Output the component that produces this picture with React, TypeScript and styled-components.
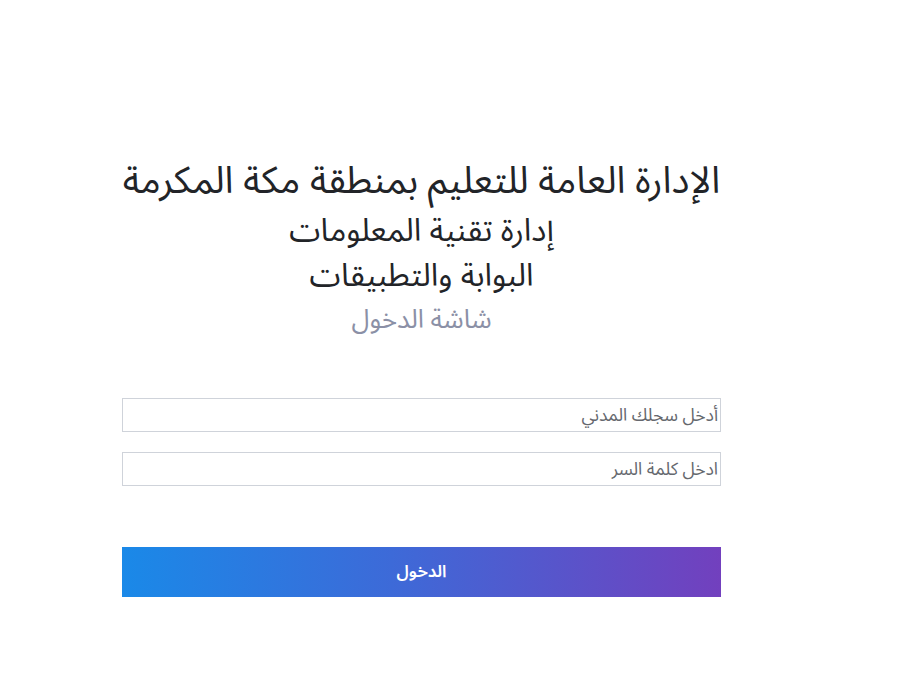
import styled, { createGlobalStyle } from 'styled-components';

const GlobalStyle = createGlobalStyle`
  html, body {
    margin: 0;
    padding: 0;
    background: #ffffff;
  }
  body {
    font-family: "Noto Sans Arabic", "Noto Sans", "DejaVu Sans", sans-serif;
  }
`;

const Page = styled.main`
  width: 921px;
  min-height: 679px;
  display: flex;
  justify-content: flex-start;
`;

const Panel = styled.div`
  width: 599px;
  margin-left: 122px;
  padding-top: 156px;
  direction: rtl;
  display: flex;
  flex-direction: column;
`;

const Titles = styled.header`
  display: flex;
  flex-direction: column;
  align-items: center;
  text-align: center;
`;

const Title = styled.h1<{ $size: number; $lh: number; $muted?: boolean }>`
  margin: 0;
  font-size: ${(p) => p.$size}px;
  font-weight: 400;
  line-height: ${(p) => p.$lh}px;
  color: ${(p) => (p.$muted ? '#8b90a6' : '#222428')};
  white-space: nowrap;
`;

const Form = styled.form`
  margin-top: 54px;
  display: flex;
  flex-direction: column;
  gap: 20px;
`;

const Field = styled.input`
  box-sizing: border-box;
  width: 100%;
  height: 34px;
  border: 1px solid #cfd3da;
  border-radius: 0;
  padding: 0 2px;
  font-family: inherit;
  font-size: 17.5px;
  color: #333;
  direction: rtl;
  outline: none;
  &::placeholder {
    color: #65686e;
  }
`;

const Submit = styled.button`
  margin-top: 41px;
  width: 100%;
  height: 50px;
  border: none;
  background: linear-gradient(90deg, #1a89e8 0%, #3d6ad8 45%, #7240be 100%);
  color: #ffffff;
  font-family: inherit;
  font-size: 17px;
  font-weight: 600;
  cursor: pointer;
`;

const App = () => {
  return (
    <>
      <GlobalStyle />
      <Page>
        <Panel>
          <Titles>
            <Title $size={37.5} $lh={50}>
              الإدارة العامة للتعليم بمنطقة مكة المكرمة
            </Title>
            <Title $size={31.6} $lh={50}>
              إدارة تقنية المعلومات
            </Title>
            <Title $size={31.6} $lh={40}>
              البوابة والتطبيقات
            </Title>
            <Title $size={26} $lh={48} $muted>
              شاشة الدخول
            </Title>
          </Titles>
          <Form onSubmit={(e) => e.preventDefault()}>
            <Field type="text" placeholder="أدخل سجلك المدني" />
            <Field type="password" placeholder="ادخل كلمة السر" />
            <Submit type="submit">الدخول</Submit>
          </Form>
        </Panel>
      </Page>
    </>
  );
};

export default App;
